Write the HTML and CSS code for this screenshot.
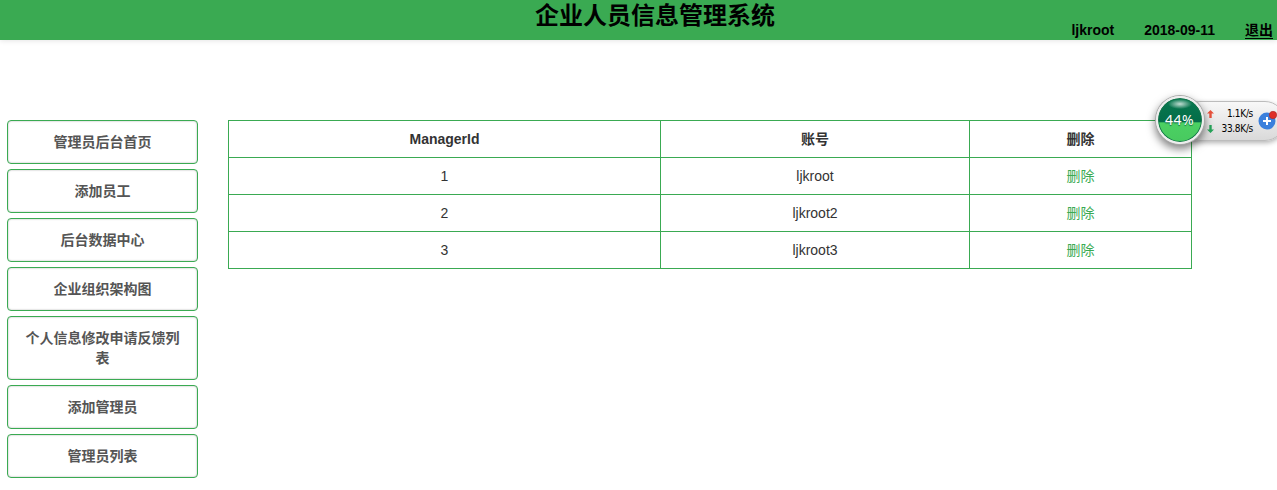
FILE: index.html
```html
<!DOCTYPE html>
<html lang="zh-CN">
<head>
<meta charset="utf-8">
<title>企业人员信息管理系统</title>
<link rel="stylesheet" href="styles.css">
</head>
<body>
<header class="topbar">
  <h1 class="title">企业人员信息管理系统</h1>
  <div class="userinfo">
    <span>ljkroot</span>
    <span>2018-09-11</span>
    <a class="logout" href="#">退出</a>
  </div>
</header>
<div class="layout">
  <nav class="menu">
    <a class="menu-item" href="#">管理员后台首页</a>
    <a class="menu-item" href="#">添加员工</a>
    <a class="menu-item" href="#">后台数据中心</a>
    <a class="menu-item" href="#">企业组织架构图</a>
    <a class="menu-item" href="#">个人信息修改申请反馈列表</a>
    <a class="menu-item" href="#">添加管理员</a>
    <a class="menu-item" href="#">管理员列表</a>
  </nav>
  <main>
    <table class="managers">
      <colgroup><col class="col-id"><col class="col-account"><col class="col-delete"></colgroup>
      <thead><tr><th>ManagerId</th><th>账号</th><th>删除</th></tr></thead>
      <tbody>
        <tr><td>1</td><td>ljkroot</td><td><a class="delete" href="#">删除</a></td></tr>
        <tr><td>2</td><td>ljkroot2</td><td><a class="delete" href="#">删除</a></td></tr>
        <tr><td>3</td><td>ljkroot3</td><td><a class="delete" href="#">删除</a></td></tr>
      </tbody>
    </table>
  </main>
</div>
<aside class="monitor">
  <div class="ball"><span class="percent">44%</span></div>
  <div class="speeds">
    <div class="speed">
      <svg class="arrow" viewBox="0 0 7 8"><path d="M3.5 0L7 3.6H4.7V8H2.3V3.6H0Z" fill="#e8523c"/></svg>
      <span>1.1K/s</span>
    </div>
    <div class="speed">
      <svg class="arrow" viewBox="0 0 7 8"><path d="M3.5 8L7 4.4H4.7V0H2.3V4.4H0Z" fill="#26a55a"/></svg>
      <span>33.8K/s</span>
    </div>
  </div>
  <svg class="boost" viewBox="0 0 20 22">
    <circle cx="9" cy="13" r="8.5" fill="#3b80dc"/>
    <path d="M9 9V17M5 13H13" stroke="#fff" stroke-width="2"/>
    <circle cx="15" cy="7" r="3.7" fill="#df2e28" stroke="#a82a2a" stroke-width=".6"/>
  </svg>
</aside>
</body>
</html>
```
FILE: styles.css
```css
* { box-sizing: border-box; }
body {
  margin: 0;
  height: 490px;
  overflow: hidden;
  position: relative;
  background: #fff;
  color: #333;
  font: 14px/20px "Liberation Sans", Arial, "Noto Sans CJK SC", sans-serif;
}
.topbar {
  display: grid;
  grid-template-columns: 1fr 240px 1fr;
  height: 40px;
  padding-right: 4px;
  padding-left: 37px;
  background: #3aaa52;
  box-shadow: 0 1px 5px rgba(0, 0, 0, .1);
  color: #000;
}
.title {
  grid-column: 2;
  margin: 0;
  font-size: 24px;
  line-height: 31px;
  white-space: nowrap;
}
.userinfo {
  display: flex;
  gap: 30px;
  justify-content: flex-end;
  padding-top: 20px;
  font-weight: bold;
}
.logout {
  height: 19px;
  border-bottom: 1px solid #000;
  color: #000;
  text-decoration: none;
}
.layout {
  display: flex;
  gap: 30px;
  align-items: flex-start;
  padding: 80px 0 0 7px;
}
.menu {
  display: flex;
  flex-direction: column;
  gap: 5px;
  width: 191px;
}
.menu-item {
  padding: 11px 16px;
  border: 1px solid #3aaa52;
  border-radius: 4px;
  box-shadow: inset 0 0 2px rgba(0, 0, 0, .35);
  color: #555;
  font-weight: bold;
  text-align: center;
  text-decoration: none;
}
.managers {
  width: 964px;
  table-layout: fixed;
  border-collapse: collapse;
  text-align: center;
}
.col-id { width: 432px; }
.col-account { width: 309px; }
.col-delete { width: 222px; }
.managers th, .managers td {
  height: 37px;
  padding: 8px;
  border: 1px solid #3aaa52;
}
.delete { color: #3aaa52; text-decoration: none; }
.monitor {
  position: absolute;
  top: 101px;
  right: -8px;
  display: flex;
  align-items: center;
  width: 105px;
  height: 40px;
  padding-left: 27px;
  border: 1px solid #bcbcbc;
  border-radius: 20px;
  background: linear-gradient(#f8f8f8, #d9d9d9);
  box-shadow: 0 2px 5px rgba(0, 0, 0, .3);
}
.ball {
  position: absolute;
  top: -6px;
  left: -25px;
  display: flex;
  align-items: center;
  justify-content: center;
  width: 48px;
  height: 48px;
  border: 2px solid #eee;
  border-radius: 50%;
  background:
    radial-gradient(ellipse 12px 5px at 50% 6px, rgba(255, 255, 255, .75), transparent) padding-box,
    linear-gradient(#087950 0, #046c48 55%, #4bd163 56%, #48c95f 100%) padding-box;
  box-shadow: 0 0 0 1px #aaa, inset 0 0 0 1px #16764c, 0 4px 9px 1px rgba(0, 0, 0, .5);
}
.percent {
  margin-left: -1px;
  padding-bottom: 1px;
  color: #fff;
  font: 14px/16px "Noto Sans", sans-serif;
  letter-spacing: .5px;
  text-shadow: 0 1px 1px #06643f;
}
.speeds {
  flex: none;
  width: 46px;
  color: #000;
  font: 10px/15px "DejaVu Sans Condensed", "DejaVu Sans", sans-serif;
  font-stretch: condensed;
  letter-spacing: -.3px;
  margin-left: -1px;
}
.speed {
  display: flex;
  align-items: center;
  justify-content: space-between;
}
.arrow { flex: none; width: 7px; height: 8px; }
.boost {
  flex: none;
  width: 20px;
  height: 22px;
  margin: -4px 0 0 5px;
}
```
